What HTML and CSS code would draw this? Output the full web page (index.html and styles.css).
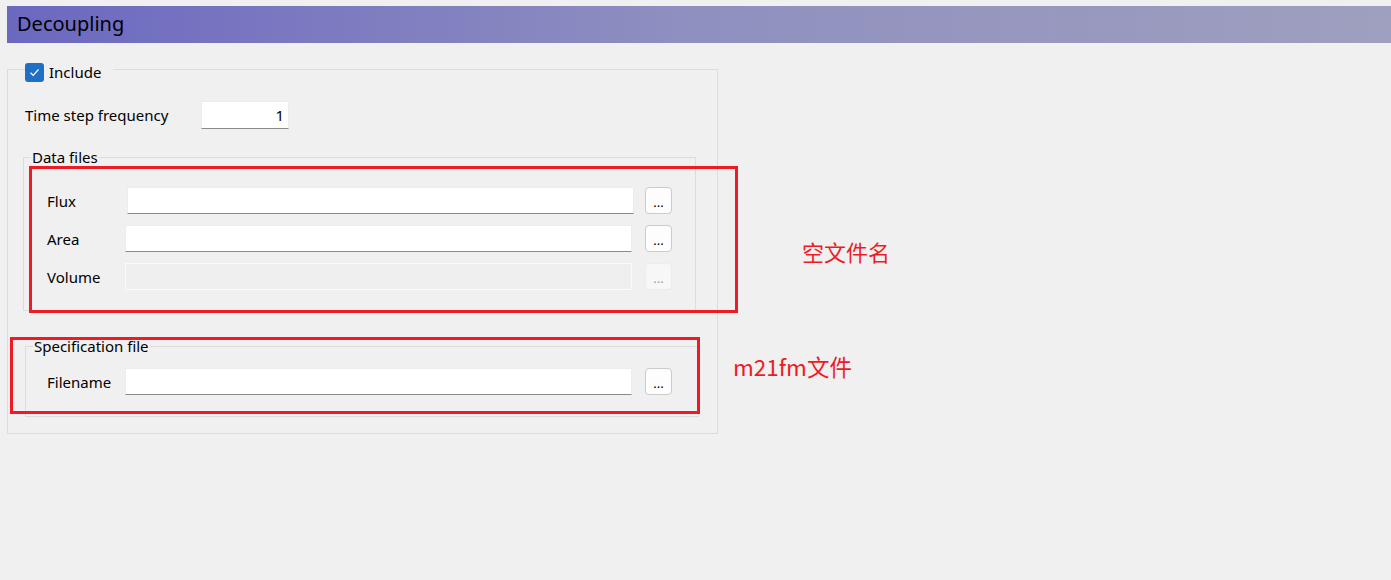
FILE: index.html
```html
<!DOCTYPE html>
<html lang="en">
<head>
<meta charset="UTF-8" />
<title>Decoupling</title>
<link rel="stylesheet" href="styles.css">
</head>
<body>
<div class="titlebar">Decoupling</div>

<div class="panel">
  <div class="panel-legend">
    <span class="check">
      <svg width="11" height="9" viewBox="0 0 11 9"><path d="M1.5 4.8 L4.2 7.3 L9.5 1.5" fill="none" stroke="#fff" stroke-width="1.2"/></svg>
    </span>
    <span>Include</span>
  </div>

  <div class="row-time">
    <label class="time-label">Time step frequency</label>
    <input class="num-input" type="text" value="1" />
  </div>

  <div class="group group-data">
    <span class="group-title">Data files</span>
    <div class="file-row">
      <label>Flux</label>
      <input class="text-input shifted" type="text" />
      <button class="browse">...</button>
    </div>
    <div class="file-row">
      <label>Area</label>
      <input class="text-input" type="text" />
      <button class="browse">...</button>
    </div>
    <div class="file-row">
      <label>Volume</label>
      <input class="text-input" type="text" disabled />
      <button class="browse" disabled>...</button>
    </div>
  </div>

  <div class="group group-spec">
    <span class="group-title">Specification file</span>
    <div class="file-row">
      <label>Filename</label>
      <input class="text-input" type="text" />
      <button class="browse">...</button>
    </div>
  </div>
</div>

<!-- annotations drawn over the screenshot -->
<div class="mark mark-data"></div>
<div class="mark mark-spec"></div>
<div class="note note-data">空文件名</div>
<div class="note note-spec">m21fm文件</div>
</body>
</html>
```

FILE: styles.css
```css
* {
  box-sizing: border-box;
}

body {
  margin: 0;
  background: #f0f0f0;
  font-family: "Noto Sans", "Open Sans", sans-serif;
  font-size: 15px;
  color: #000;
  position: relative;
  min-height: 580px;
}

.titlebar {
  margin: 6px 0 0 7px;
  height: 37px;
  line-height: 36px;
  padding-left: 10px;
  font-size: 20px;
  background: linear-gradient(90deg, #6b68c0 0%, #9090c0 50%, #9f9fbf 100%);
}

.panel {
  position: relative;
  margin: 26px 0 0 7px;
  width: 711px;
  height: 365px;
  border: 1px solid #dcdcdc;
  padding: 31px 0 0 17px;
}

.panel-legend {
  position: absolute;
  top: -8px;
  left: 17px;
  display: flex;
  align-items: center;
  gap: 5px;
  padding-right: 12px;
  background: #f0f0f0;
  height: 20px;
}

.check {
  width: 19px;
  height: 19px;
  border-radius: 3px;
  background: #1f6fc5;
  display: flex;
  align-items: center;
  justify-content: center;
}

.row-time {
  display: flex;
  align-items: center;
  height: 28px;
}

.time-label {
  width: 176px;
}

.num-input {
  width: 88px;
  height: 28px;
  border: 1px solid #ececec;
  border-bottom-color: #8a8a8a;
  background: #fff;
  text-align: right;
  padding: 0 4px;
  font: inherit;
}

.group {
  position: relative;
  border: 1px solid #dcdcdc;
}

.group-title {
  position: absolute;
  top: -11px;
  left: 7px;
  padding: 0 1px;
  background: #f0f0f0;
  line-height: 20px;
}

.group-data {
  margin: 28px 0 0 -2px;
  width: 673px;
  height: 154px;
  padding: 29px 0 0 23px;
  display: flex;
  flex-direction: column;
  gap: 11px;
}

.group-spec {
  margin-top: 35px;
  width: 674px;
  height: 71px;
  padding: 21px 0 0 21px;
}

.file-row {
  display: grid;
  grid-template-columns: 78px 507px 40px;
  align-items: center;
  height: 27px;
}

.text-input {
  height: 27px;
  border: 1px solid #ececec;
  border-bottom-color: #8a8a8a;
  background: #fff;
  font: inherit;
}

.text-input.shifted {
  margin: 0 -2px 0 2px;
}

.text-input:disabled {
  background: #efefef;
  border-color: #fafafa;
}

.browse {
  justify-self: end;
  width: 27px;
  height: 27px;
  padding: 4px 0 0;
  border: 1px solid #cbcbcb;
  border-radius: 4px;
  background: #fdfdfd;
  font-family: "Noto Sans", sans-serif;
  font-size: 13px;
  line-height: 1;
  color: #000;
}

.browse:disabled {
  background: #f7f7f7;
  border-color: #ececec;
  color: #9a9a9a;
}

.mark {
  position: absolute;
  border: 3px solid #ed1c24;
}

.mark-data {
  left: 29px;
  top: 166px;
  width: 709px;
  height: 147px;
}

.mark-spec {
  left: 10px;
  top: 337px;
  width: 690px;
  height: 77px;
}

.note {
  position: absolute;
  color: #ed1c24;
  font-family: "Noto Sans CJK SC", sans-serif;
  font-size: 22px;
  line-height: 1;
}

.note-data {
  left: 802px;
  top: 240px;
}

.note-spec {
  left: 733px;
  top: 355px;
  font-size: 22.5px;
}
```
